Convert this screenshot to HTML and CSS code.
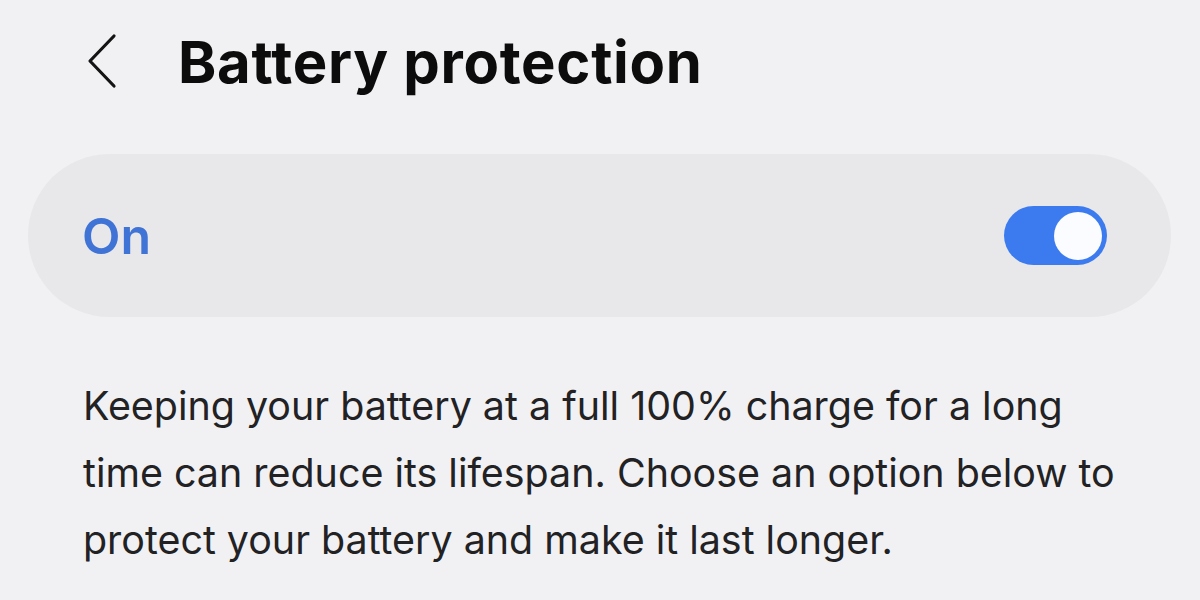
FILE: index.html
```html
<!DOCTYPE html>
<html lang="en">
<head>
<meta charset="utf-8">
<title>Battery protection</title>
<link rel="stylesheet" href="styles.css">
</head>
<body>
  <header class="app-bar">
    <button class="back" aria-label="Back">
      <svg viewBox="0 0 32 56" width="32" height="56" aria-hidden="true">
        <path d="M28 3 L4 28 L28 53" fill="none" stroke="#141414" stroke-width="3.2" stroke-linecap="round" stroke-linejoin="round"/>
      </svg>
    </button>
    <h1 class="title">Battery protection</h1>
  </header>

  <section class="master-switch">
    <span class="switch-label">On</span>
    <div class="toggle is-on" role="switch" aria-checked="true">
      <span class="toggle-knob"></span>
    </div>
  </section>

  <p class="description">Keeping your battery at a full 100% charge for a long time can reduce its lifespan. Choose an option below to protect your battery and make it last longer.</p>
</body>
</html>
```

FILE: styles.css
```css
html, body {
  margin: 0;
  padding: 0;
}

body {
  width: 1200px;
  height: 600px;
  overflow: hidden;
  background: #f1f1f3;
  font-family: Inter, "Noto Sans", "Liberation Sans", sans-serif;
  color: #1f1f1f;
}

.app-bar {
  display: flex;
  align-items: center;
  height: 124px;
  padding-left: 86px;
  box-sizing: border-box;
}

.back {
  display: flex;
  align-items: center;
  justify-content: center;
  width: 32px;
  height: 56px;
  padding: 0;
  border: 0;
  background: none;
  margin-top: -2px;
}

.title {
  margin: 0 0 0 60px;
  font-size: 58px;
  font-weight: 700;
  line-height: 1;
  color: #0c0c0c;
  letter-spacing: 0.7px;
}

.master-switch {
  display: flex;
  align-items: center;
  justify-content: space-between;
  height: 163px;
  margin: 30px 29px 0 28px;
  padding: 0 64px 0 54px;
  border-radius: 82px;
  background: #e8e8ea;
}

.switch-label {
  font-size: 50px;
  font-weight: 600;
  color: #3f73d6;
}

.toggle {
  display: flex;
  align-items: center;
  justify-content: flex-end;
  width: 103px;
  height: 59px;
  padding: 0 5px;
  box-sizing: border-box;
  border-radius: 30px;
  background: #3b7bef;
}

.toggle-knob {
  width: 48px;
  height: 48px;
  border-radius: 50%;
  background: #fbfcff;
}

.description {
  margin: 56px 68px 0 83px;
  font-size: 39.4px;
  line-height: 67px;
  color: #222224;
}
```
